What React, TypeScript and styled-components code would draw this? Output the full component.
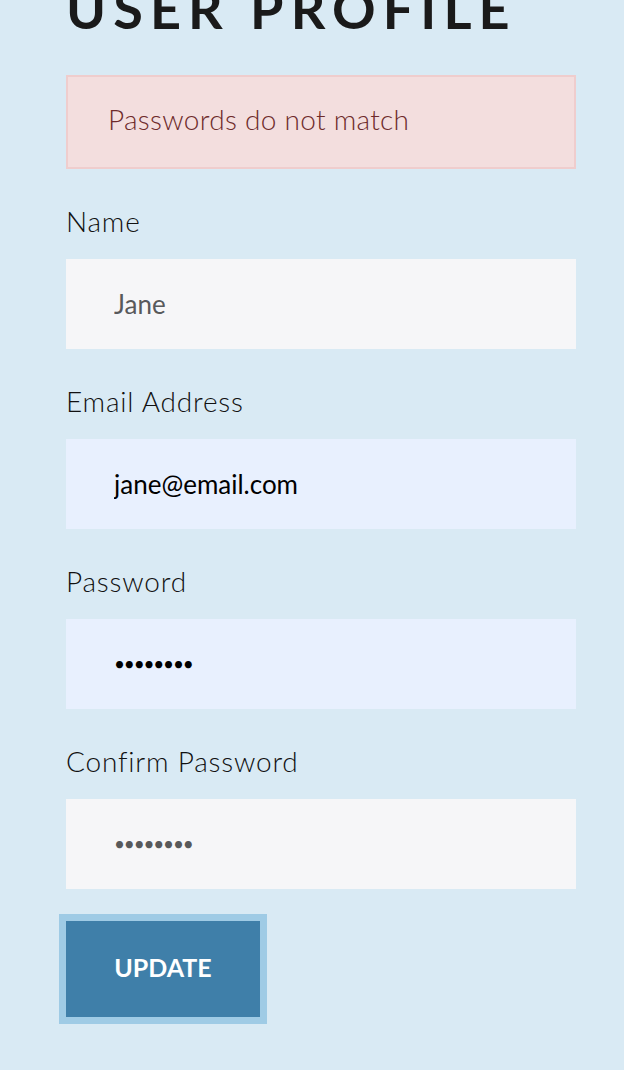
import React from "react";
import styled, { createGlobalStyle } from "styled-components";

const GlobalStyle = createGlobalStyle`
  html, body {
    margin: 0;
    padding: 0;
    background: #d9eaf4;
    font-family: "Lato", "Open Sans", sans-serif;
  }
  * { box-sizing: border-box; }
`;

const Page = styled.div`
  min-height: 1070px;
  background: #d9eaf4;
  padding: 0 48px 0 66px;
  overflow: hidden;
`;

const Title = styled.h1`
  margin: -23px 0 0 0;
  font-size: 54px;
  line-height: 64.8px;
  font-weight: 700;
  letter-spacing: 7.1px;
  color: #1a1a1a;
  white-space: nowrap;
`;

const Form = styled.form`
  display: flex;
  flex-direction: column;
  gap: 32px;
  margin-top: 33px;
`;

const Alert = styled.div`
  height: 94px;
  display: flex;
  align-items: center;
  padding: 0 0 5px 40px;
  background: #f3dede;
  border: 2px solid #efcdcd;
  color: #6e2b2b;
  font-size: 28px;
  font-weight: 300;
  letter-spacing: 0.3px;
`;

const Field = styled.div`
  display: flex;
  flex-direction: column;
`;

const Label = styled.label`
  display: block;
  font-size: 28px;
  line-height: 40px;
  font-weight: 300;
  color: #111;
  letter-spacing: 0.8px;
  margin-bottom: 18px;
`;

const Input = styled.input<{ $filled?: boolean }>`
  display: block;
  width: 100%;
  height: 90px;
  border: none;
  outline: none;
  padding: 0 48px;
  font-family: "Lato", "Open Sans", sans-serif;
  font-size: 26px;
  font-weight: 400;
  background: ${(p) => (p.$filled ? "#e8f0fe" : "#f6f6f8")};
  color: ${(p) => (p.$filled ? "#000" : "#58595b")};

  &[type="password"] {
    font-size: 19px;
    letter-spacing: -1.2px;
  }
`;

const Button = styled.button`
  align-self: flex-start;
  width: 194px;
  height: 96px;
  border: none;
  background: #3f7fa9;
  color: #fff;
  font-family: "Lato", "Open Sans", sans-serif;
  font-size: 25px;
  font-weight: 700;
  padding: 0 0 4px 0;
  box-shadow: 0 0 0 7px #9fcbe5;
  cursor: pointer;
`;

export default function App() {
  return (
    <>
      <GlobalStyle />
      <Page>
        <Title>USER PROFILE</Title>
        <Form onSubmit={(e) => e.preventDefault()}>
          <Alert>Passwords do not match</Alert>
          <Field>
            <Label htmlFor="name">Name</Label>
            <Input id="name" type="text" defaultValue="Jane" />
          </Field>
          <Field>
            <Label htmlFor="email">Email Address</Label>
            <Input id="email" type="email" defaultValue="jane@email.com" $filled />
          </Field>
          <Field>
            <Label htmlFor="password">Password</Label>
            <Input id="password" type="password" defaultValue="12345678" $filled />
          </Field>
          <Field>
            <Label htmlFor="confirm">Confirm Password</Label>
            <Input id="confirm" type="password" defaultValue="12345678" />
          </Field>
          <Button type="submit">UPDATE</Button>
        </Form>
      </Page>
    </>
  );
}
